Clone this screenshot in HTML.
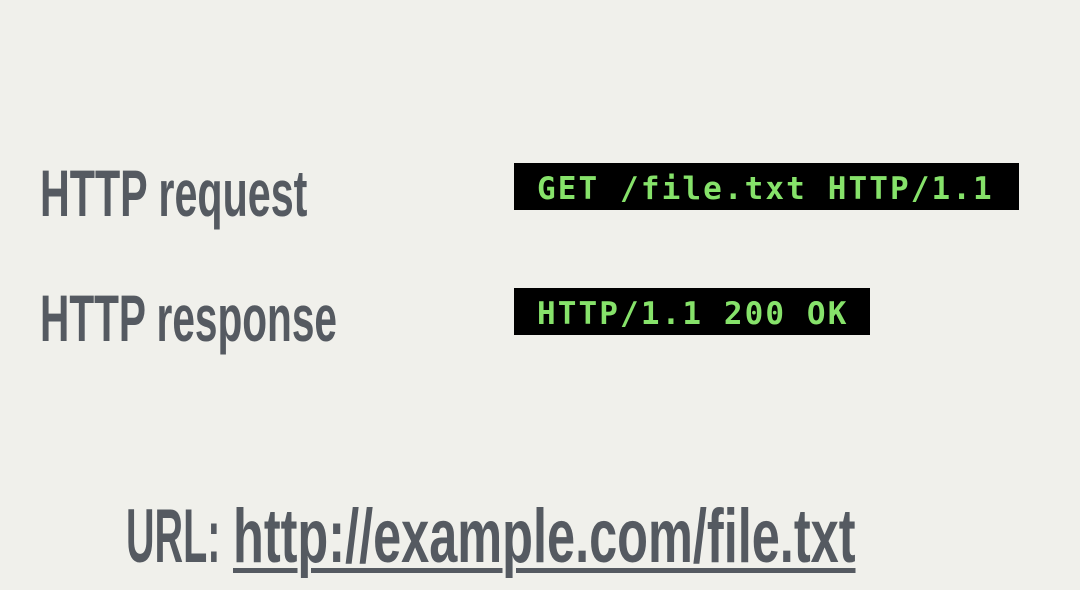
<!DOCTYPE html>
<html><head><meta charset="utf-8"><style>
html,body{margin:0;padding:0}
body{width:1080px;height:590px;background:#f0f0eb;position:relative;overflow:hidden;font-family:"Liberation Sans",sans-serif}
.t{position:absolute;font-weight:bold;color:#555a61;line-height:1;white-space:nowrap;transform-origin:0 0}
.box{position:absolute;background:#000}
.c{position:absolute;font-family:"DejaVu Sans Mono",monospace;font-weight:bold;color:#86e26a;font-size:31px;letter-spacing:2.1px;line-height:1;white-space:nowrap}
</style></head><body>
<div class="t" style="left:40px;top:160px;font-size:66px;transform:scaleX(0.625)">HTTP request</div>
<div class="t" style="left:40px;top:285px;font-size:66px;transform:scaleX(0.615)">HTTP response</div>
<div class="box" style="left:514px;top:163px;width:505px;height:47px"></div>
<div class="c" style="left:537px;top:174px">GET /file.txt HTTP/1.1</div>
<div class="box" style="left:514px;top:288px;width:356px;height:47px"></div>
<div class="c" style="left:537px;top:299px">HTTP/1.1 200 OK</div>
<div class="t" style="left:126px;top:499px;font-size:76px;transform:scaleX(0.52)">URL:</div>
<div class="t" style="left:233px;top:499px;font-size:76px;transform:scaleX(0.664);text-decoration:underline;text-decoration-thickness:5px;text-underline-offset:6px">http://example.com/file.txt</div>
</body></html>
